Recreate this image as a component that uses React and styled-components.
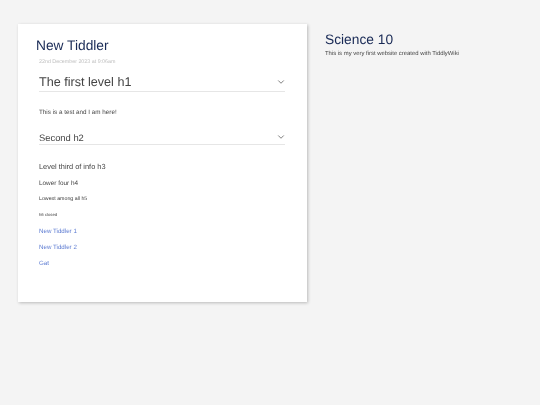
import React from "react";
import styled, { createGlobalStyle } from "styled-components";
import { FiChevronDown } from "react-icons/fi";

const GlobalStyle = createGlobalStyle`
  html, body {
    margin: 0;
    height: 100%;
    background: #f4f4f4;
    font-family: "Liberation Sans", Arial, sans-serif;
    text-rendering: geometricPrecision;
  }
`;

// the reference is a scaled down capture, so everything is a little soft
const Page = styled.div`
  display: flex;
  align-items: flex-start;
  gap: 18px;
  width: 540px;
  height: 405px;
  padding: 24px 0 0 18px;
  box-sizing: border-box;
  overflow: hidden;
  background: #f4f4f4;
  filter: blur(0.45px);
`;

const Card = styled.div`
  width: 289px;
  height: 278px;
  box-sizing: border-box;
  padding: 12px 22px 0 18px;
  background: #fff;
  box-shadow: 1px 1px 3px rgba(0, 0, 0, 0.24);
`;

const Title = styled.h2`
  margin: 0;
  font-size: 13.75px;
  font-weight: 400;
  line-height: 19px;
  color: #182955;
`;

const Body = styled.div`
  padding-left: 3px;
`;

const Subtitle = styled.div`
  margin-top: 4px;
  font-size: 5.34px;
  line-height: 7px;
  color: #c0c0c0;
`;

const FoldHeading = styled.div`
  display: flex;
  align-items: center;
  justify-content: space-between;
  margin-top: ${(p) => p.$top}px;
  height: ${(p) => p.$height}px;
  font-size: ${(p) => p.$size}px;
  color: #444;
  border-bottom: 1px solid #e6e6e6;
  svg {
    width: 10px;
    height: 10px;
    margin-right: -1px;
    stroke-width: 1.8;
    color: #555;
  }
`;

const Paragraph = styled.p`
  margin: ${(p) => p.$top}px 0 0;
  font-size: ${(p) => p.$size}px;
  line-height: ${(p) => p.$line}px;
  color: #444;
`;

const TiddlerLink = styled.a`
  display: block;
  margin-top: ${(p) => p.$top}px;
  font-size: 6.2px;
  line-height: 9px;
  color: #5f7dd2;
  text-decoration: none;
`;

const Sidebar = styled.div`
  padding-top: 6px;
`;

const SiteTitle = styled.h1`
  margin: 0;
  font-size: 13.75px;
  font-weight: 400;
  line-height: 19px;
  color: #182955;
`;

const SiteSubtitle = styled.div`
  margin-top: 1px;
  font-size: 5.92px;
  line-height: 8px;
  color: #444;
`;

export default function App() {
  return (
    <>
      <GlobalStyle />
      <Page>
        <Card>
          <Title>New Tiddler</Title>
          <Body>
            <Subtitle>22nd December 2023 at 9:06am</Subtitle>
            <FoldHeading $top={6} $height={19} $size={12.6}>
              The first level h1
              <FiChevronDown />
            </FoldHeading>
            <Paragraph $top={16} $size={6.3} $line={9}>
              This is a test and I am here!
            </Paragraph>
            <FoldHeading $top={13} $height={14} $size={9.4}>
              Second h2
              <FiChevronDown />
            </FoldHeading>
            <Paragraph $top={16} $size={7.4} $line={11}>
              Level third of info h3
            </Paragraph>
            <Paragraph $top={7} $size={6.4} $line={9}>
              Lower four h4
            </Paragraph>
            <Paragraph $top={7} $size={5.27} $line={8}>
              Lowest among all h5
            </Paragraph>
            <Paragraph $top={8} $size={4.25} $line={7}>
              h6 closed
            </Paragraph>
            <TiddlerLink href="#" $top={9}>New Tiddler 1</TiddlerLink>
            <TiddlerLink href="#" $top={7}>New Tiddler 2</TiddlerLink>
            <TiddlerLink href="#" $top={7}>Gat</TiddlerLink>
          </Body>
        </Card>
        <Sidebar>
          <SiteTitle>Science 10</SiteTitle>
          <SiteSubtitle>This is my very first website created with TiddlyWiki</SiteSubtitle>
        </Sidebar>
      </Page>
    </>
  );
}
